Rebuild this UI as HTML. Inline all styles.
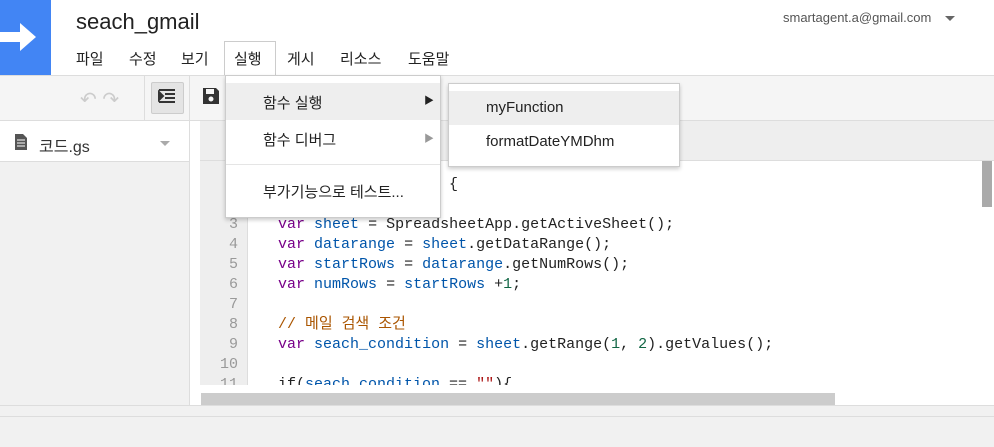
<!DOCTYPE html>
<html><head><meta charset="utf-8"><style>
*{margin:0;padding:0;box-sizing:border-box}
body{width:994px;height:447px;overflow:hidden;background:#fff;font-family:"Liberation Sans","Noto Sans CJK KR",sans-serif;position:relative;color:#222}
.abs{position:absolute}
.menu span{position:absolute;top:48px;font-size:15px;color:#222}
.code{font-family:"Liberation Mono","Noto Sans CJK KR",monospace;font-size:15px;line-height:20px;white-space:pre}
.k{color:#708}.v{color:#05a}.c{color:#a50}.n{color:#164}.s{color:#a11}
.ln{color:#999;text-align:right;width:38px}
</style></head><body>
<div class="abs" style="left:0;top:0;width:51px;height:75px;background:#4285f4"></div>
<svg class="abs" style="left:0;top:20px" width="40" height="34"><path d="M0 12h20V3l16 14-16 14v-9H0z" fill="#fff"/></svg>
<div class="abs" style="left:76px;top:9px;font-size:22px;color:#222">seach_gmail</div>
<div class="abs" style="left:783px;top:10px;font-size:13px;color:#555">smartagent.a@gmail.com</div>
<div class="abs" style="left:945px;top:16px;width:0;height:0;border:5px solid transparent;border-top-color:#666"></div>
<div class="menu">
<span style="left:76px">파일</span><span style="left:129px">수정</span><span style="left:181px">보기</span>
<div class="abs" style="left:224px;top:41px;width:52px;height:36px;border:1px solid #ccc;border-bottom:none;background:#fff"></div>
<span style="left:234px">실행</span><span style="left:287px">게시</span><span style="left:340px">리소스</span><span style="left:408px">도움말</span>
</div>
<div class="abs" style="left:0;top:75px;width:994px;height:46px;background:#f5f5f5;border-top:1px solid #ddd;border-bottom:1px solid #ddd"></div>
<div class="abs" style="left:144px;top:76px;width:1px;height:44px;background:#ddd"></div>
<div class="abs" style="left:189px;top:76px;width:1px;height:44px;background:#ddd"></div>
<div class="abs" style="left:80px;top:87px;font-size:20px;color:#ccc">↶ ↷</div>
<div class="abs" style="left:151px;top:82px;width:33px;height:32px;background:#e4e4e4;border:1px solid #ccc;border-radius:2px"></div>
<svg class="abs" style="left:157px;top:88px" width="20" height="18"><path d="M2 2h16M8 6h10M8 10h10M2 14h16M2 4v8l4-4z" stroke="#333" stroke-width="2" fill="#333"/></svg>
<svg class="abs" style="left:202px;top:87px" width="18" height="18"><path d="M1 1h13l3 3v13H1z" fill="#333"/><rect x="4" y="2" width="8" height="5" fill="#f5f5f5"/><circle cx="9" cy="12" r="2.5" fill="#f5f5f5"/></svg>
<div class="abs" style="left:0;top:121px;width:190px;height:284px;background:#f1f1f1;border-right:1px solid #ddd"></div>
<div class="abs" style="left:0;top:121px;width:189px;height:41px;background:#fff;border-bottom:1px solid #ddd"></div>
<svg class="abs" style="left:15px;top:134px" width="12" height="16"><path d="M0 0h8l4 4v12H0z" fill="#555"/><path d="M2 6h8M2 9h8M2 12h8" stroke="#fff"/></svg>
<div class="abs" style="left:39px;top:133px;font-size:16px;color:#333">코드.gs</div>
<div class="abs" style="left:160px;top:141px;border:5px solid transparent;border-top-color:#aaa"></div>
<div class="abs" style="left:200px;top:121px;width:794px;height:40px;background:#eee;border-bottom:1px solid #ddd"></div>
<div class="abs" style="left:200px;top:161px;width:48px;height:224px;background:#eee;border-right:1px solid #ddd"></div>
<div class="abs code ln" style="left:200px;top:175px;height:210px;overflow:hidden">1
2
3
4
5
6
7
8
9
10
11</div>
<div class="abs code" style="left:260px;top:175px;height:210px;overflow:hidden">function myFunctio() {

  <span class="k">var</span> <span class="v">sheet</span> = SpreadsheetApp.getActiveSheet();
  <span class="k">var</span> <span class="v">datarange</span> = <span class="v">sheet</span>.getDataRange();
  <span class="k">var</span> <span class="v">startRows</span> = <span class="v">datarange</span>.getNumRows();
  <span class="k">var</span> <span class="v">numRows</span> = <span class="v">startRows</span> +<span class="n">1</span>;

  <span class="c">// 메일 검색 조건</span>
  <span class="k">var</span> <span class="v">seach_condition</span> = <span class="v">sheet</span>.getRange(<span class="n">1</span>, <span class="n">2</span>).getValues();

  if(<span class="v">seach_condition</span> == <span class="s">""</span>){</div>
<div class="abs" style="left:981px;top:161px;width:13px;height:224px;background:#fff"></div>
<div class="abs" style="left:982px;top:161px;width:10px;height:46px;background:#aaa"></div>
<div class="abs" style="left:201px;top:393px;width:634px;height:12px;background:#ccc"></div>
<div class="abs" style="left:0;top:405px;width:994px;height:42px;background:#f1f1f1;border-top:1px solid #ddd"></div>
<div class="abs" style="left:0;top:416px;width:994px;height:1px;background:#ddd"></div>
<div class="abs" style="left:225px;top:75px;width:216px;height:143px;background:#fff;border:1px solid #ccc;box-shadow:0 2px 4px rgba(0,0,0,.2)"></div>
<div class="abs" style="left:226px;top:83px;width:214px;height:37px;background:#eee"></div>
<div class="abs" style="left:263px;top:92px;font-size:15px;color:#222">함수 실행</div>
<div class="abs" style="left:424px;top:92px;font-size:10px;color:#222">▶</div>
<div class="abs" style="left:263px;top:129px;font-size:15px;color:#222">함수 디버그</div>
<div class="abs" style="left:424px;top:130px;font-size:10px;color:#999">▶</div>
<div class="abs" style="left:226px;top:164px;width:214px;height:1px;background:#e5e5e5"></div>
<div class="abs" style="left:263px;top:181px;font-size:15px;color:#222">부가기능으로 테스트...</div>
<div class="abs" style="left:448px;top:83px;width:232px;height:84px;background:#fff;border:1px solid #ccc;box-shadow:0 2px 4px rgba(0,0,0,.2)"></div>
<div class="abs" style="left:449px;top:91px;width:230px;height:34px;background:#eee"></div>
<div class="abs" style="left:486px;top:99px;font-size:15px;color:#222">myFunction</div>
<div class="abs" style="left:486px;top:133px;font-size:15px;color:#222">formatDateYMDhm</div>
</body></html>
